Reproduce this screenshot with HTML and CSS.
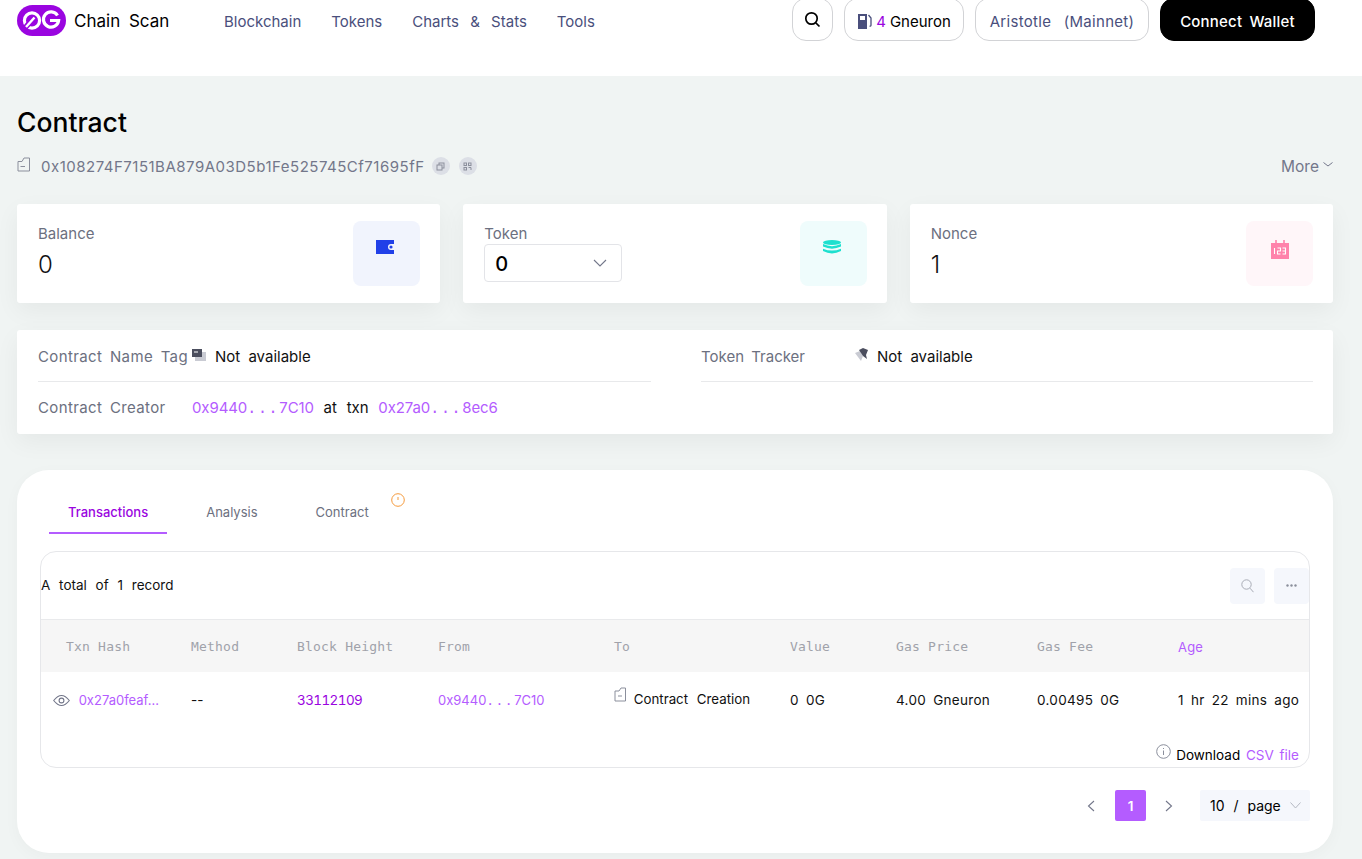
FILE: index.html
```html
<!DOCTYPE html>
<html lang="en">
<head>
  <meta charset="UTF-8" />
  <meta name="viewport" content="width=device-width, initial-scale=1.0"/>
  <title>0G Chain Scan</title>
  <link rel="stylesheet" href="styles.css">
</head>
<body>
  <header class="topbar">
    <div class="brand">
      <svg class="logo" width="49" height="31" viewBox="0 0 49 31">
        <rect x="0" y="0" width="49" height="31" rx="15.5" fill="#9a05e0"/>
        <circle cx="15" cy="15.5" r="7.6" fill="none" stroke="#fff" stroke-width="3.2"/>
        <path d="M7 24 L16 14" stroke="#9a05e0" stroke-width="5.5"/>
        <path d="M9 22 L17.5 12.5" stroke="#fff" stroke-width="2.4"/>
        <path d="M40.5 10.5 A7.6 7.6 0 1 0 41.6 15.5 H33" fill="none" stroke="#fff" stroke-width="3.2"/>
      </svg>
      <span class="brand-name">Chain Scan</span>
    </div>
    <nav class="nav">
      <a>Blockchain</a>
      <a>Tokens</a>
      <a>Charts &amp; Stats</a>
      <a>Tools</a>
    </nav>
    <div class="actions">
      <button class="pill search-btn">
        <svg width="17" height="17" viewBox="0 0 17 17" fill="none" stroke="#000" stroke-width="1.7"><circle cx="7.5" cy="7.5" r="5.7"/><path d="M11.8 11.8 L15.5 15.5"/></svg>
      </button>
      <button class="pill gas-btn">
        <svg width="15" height="17" viewBox="0 0 15 17"><path d="M1 1 H10 V16 H1 Z" fill="#4a4f7c"/><rect x="3" y="3" width="5" height="4" fill="#fff"/><path d="M11.5 2 L14 5 V12 Q14 13.5 12.5 13" fill="none" stroke="#4a4f7c" stroke-width="1.3"/></svg>
        <span class="gas-num">4</span> Gneuron
      </button>
      <button class="pill net-btn">Aristotle (Mainnet)</button>
      <button class="pill connect-btn">Connect Wallet</button>
    </div>
  </header>

  <main class="page">
    <h1 class="title">Contract</h1>
    <div class="address-row">
      <svg class="doc-icon" width="14" height="15" viewBox="0 0 14 15" fill="none" stroke="#8b8f9c" stroke-width="1"><path d="M1 4.5 H5 L7 1 H12.5 V14 H1 Z M3.5 9.5 H8"/></svg>
      <span class="address">0x108274F7151BA879A03D5b1Fe525745Cf71695fF</span>
      <span class="round-btn"><svg width="9" height="9" viewBox="0 0 9 9" fill="none" stroke="#8b8f9c"><rect x="3" y="1" width="5" height="5"/><rect x="1" y="3" width="5" height="5" fill="#dcdfe6"/></svg></span>
      <span class="round-btn"><svg width="9" height="9" viewBox="0 0 9 9" fill="none" stroke="#8b8f9c"><rect x="1" y="1" width="2.5" height="2.5"/><rect x="5.5" y="1" width="2.5" height="2.5"/><rect x="1" y="5.5" width="2.5" height="2.5"/><path d="M5.5 5.5 H8 V8"/></svg></span>
      <span class="more">More <svg width="10" height="5" viewBox="0 0 10 5" fill="none" stroke="#73778a"><path d="M0.5 0.5 L5 4 L9.5 0.5"/></svg></span>
    </div>

    <section class="cards">
      <div class="card">
        <div class="card-body">
          <div class="card-label">Balance</div>
          <div class="card-value">0</div>
        </div>
        <div class="card-icon icon-blue">
          <svg width="18" height="14" viewBox="0 0 18 14"><path d="M0 0 H18 V4 H15 A3 3 0 0 0 15 10 H18 V14 H0 Z" fill="#2140e8"/><circle cx="15" cy="7" r="1.6" fill="#2140e8"/></svg>
        </div>
      </div>
      <div class="card">
        <div class="card-body">
          <div class="card-label">Token</div>
          <div class="token-select">
            <span>0</span>
            <svg width="14" height="8" viewBox="0 0 14 8" fill="none" stroke="#73778a" stroke-width="1.1"><path d="M1 1 L7 7 L13 1"/></svg>
          </div>
        </div>
        <div class="card-icon icon-teal">
          <svg width="18" height="14" viewBox="0 0 18 17" preserveAspectRatio="none" fill="#1de0cf"><ellipse cx="9" cy="3" rx="9" ry="3"/><path d="M0 5 Q9 10 18 5 V8 Q9 13 0 8 Z"/><path d="M0 10.5 Q9 15 18 10.5 V13.5 Q9 19 0 13.5 Z"/></svg>
        </div>
      </div>
      <div class="card">
        <div class="card-body">
          <div class="card-label">Nonce</div>
          <div class="card-value">1</div>
        </div>
        <div class="card-icon icon-pink">
          <svg width="20" height="19" viewBox="0 0 20 19"><path d="M1 3 H19 V19 H1 Z" fill="#ff82ab"/><path d="M6 0 V5 M14 0 V5" stroke="#ff82ab" stroke-width="1.6"/><path d="M4.5 8 V14 M7.5 8 H10.5 V11 H7.5 V14 H10.5 M12.5 8 H15.5 V14 H12.5 M12.5 11 H15.5" stroke="#fff" stroke-width="1.1" fill="none"/></svg>
        </div>
      </div>
    </section>

    <section class="info">
      <div class="info-col">
        <div class="info-row with-line">
          <span class="info-label wide">Contract Name Tag</span>
          <svg class="tag-icon" width="14" height="12" viewBox="0 0 14 12"><rect x="3" y="3" width="11" height="9" fill="#c9cbd3"/><rect x="0" y="0" width="10" height="8" fill="#4b4e5e"/><path d="M2 3 H6" stroke="#fff"/></svg>
          <span class="info-value">Not available</span>
        </div>
        <div class="info-row second">
          <span class="info-label wide">Contract Creator</span>
          <span class="info-value creator"><a class="link">0x9440<span class="dots">...</span>7C10</a> at txn <a class="link">0x27a0<span class="dots">...</span>8ec6</a></span>
        </div>
      </div>
      <div class="info-col">
        <div class="info-row with-line">
          <span class="info-label">Token Tracker</span>
          <svg class="tag-icon" width="13" height="13" viewBox="0 0 13 13"><path d="M0 5 L5 3 L8 8 L6 13 Z" fill="#c9cbd3"/><path d="M4 2 L8 0 L13 2 L11 7 L12 11 L8 8 Z" fill="#4b4e5e"/></svg>
          <span class="info-value">Not available</span>
        </div>
      </div>
    </section>

    <section class="panel">
      <div class="tabs">
        <a class="tab active">Transactions</a>
        <a class="tab">Analysis</a>
        <a class="tab">Contract</a>
        <svg class="tab-alert" width="14" height="14" viewBox="0 0 14 14" fill="none" stroke="#f59a3c"><circle cx="7" cy="7" r="6.3"/><path d="M7 4 V7"/></svg>
      </div>

      <div class="table-box">
        <div class="toolbar">
          <span class="total">A total of 1 record</span>
          <div class="tools">
            <span class="tool-btn"><svg width="13" height="14" viewBox="0 0 13 14" fill="none" stroke="#a8abb5"><circle cx="5.5" cy="5.5" r="4.7"/><path d="M9 9.2 L12.5 13.2"/></svg></span>
            <span class="tool-btn"><svg width="11" height="3" viewBox="0 0 11 3" fill="#8b8f9c"><circle cx="1.5" cy="1.5" r="1.2"/><circle cx="5.5" cy="1.5" r="1.2"/><circle cx="9.5" cy="1.5" r="1.2"/></svg></span>
          </div>
        </div>
        <table class="tx-table">
          <colgroup>
            <col class="c-hash"><col class="c-method"><col class="c-block"><col class="c-addr"><col class="c-addr"><col class="c-method"><col class="c-block"><col class="c-block"><col>
          </colgroup>
          <thead>
            <tr>
              <th class="first">Txn Hash</th>
              <th>Method</th>
              <th>Block Height</th>
              <th>From</th>
              <th>To</th>
              <th>Value</th>
              <th>Gas Price</th>
              <th>Gas Fee</th>
              <th class="age">Age</th>
            </tr>
          </thead>
          <tbody>
            <tr>
              <td class="hash-cell">
                <svg width="17" height="13" viewBox="0 0 17 13" fill="none" stroke="#73778a" stroke-width="1.1"><path d="M0.7 6.5 Q8.5 -3.5 16.3 6.5 Q8.5 16.5 0.7 6.5 Z"/><circle cx="8.5" cy="6.5" r="2.4"/></svg>
                <a class="link">0x27a0feaf...</a>
              </td>
              <td>--</td>
              <td><a class="block-link">33112109</a></td>
              <td><a class="link addr">0x9440<span class="dots">...</span>7C10</a></td>
              <td class="to-cell">
                <svg width="13" height="15" viewBox="0 0 13 15" fill="none" stroke="#8b8f9c"><path d="M1 4 H5 L7 1 H11.5 V14 H1 Z M4 9 H8"/></svg>
                Contract Creation
              </td>
              <td class="mono">0 0G</td>
              <td class="mono">4.00 Gneuron</td>
              <td class="mono">0.00495 0G</td>
              <td class="mono">1 hr 22 mins ago</td>
            </tr>
          </tbody>
        </table>
        <div class="download">
          <svg width="15" height="15" viewBox="0 0 15 15" fill="none" stroke="#8b8f9c"><circle cx="7.5" cy="7.5" r="6.8"/><path d="M7.5 6.5 V11 M7.5 4 V5"/></svg>
          <span>Download <a class="link">CSV file</a></span>
        </div>
      </div>

      <div class="pager">
        <svg width="8" height="12" viewBox="0 0 8 12" fill="none" stroke="#73778a" stroke-width="1.1"><path d="M7 1 L1.5 6 L7 11"/></svg>
        <span class="page-num">1</span>
        <svg width="8" height="12" viewBox="0 0 8 12" fill="none" stroke="#73778a" stroke-width="1.1"><path d="M1 1 L6.5 6 L1 11"/></svg>
        <span class="page-size">10 / page
          <svg width="11" height="7" viewBox="0 0 11 7" fill="none" stroke="#b5b8c2"><path d="M0.5 0.5 L5.5 6 L10.5 0.5"/></svg>
        </span>
      </div>
    </section>
  </main>
</body>
</html>
```

FILE: styles.css
```css
html, body {
  margin: 0;
  padding: 0;
  height: 859px;
  overflow: hidden;
  font-family: 'Inter', 'Liberation Sans', sans-serif;
  background: #f0f4f3;
  color: #000;
  word-spacing: 3px;
}

a {
  text-decoration: none;
}

.topbar {
  display: flex;
  align-items: flex-start;
  height: 76px;
  padding-left: 17px;
  background: #fff;
  box-sizing: border-box;
}

.brand {
  display: flex;
  align-items: center;
  height: 41px;
  width: 207px;
  flex: none;
}

.logo {
  margin-right: 8px;
}

.brand-name {
  font-size: 17px;
  font-weight: 400;
  word-spacing: 4px;
}

.nav {
  display: flex;
  gap: 30px;
  height: 43px;
  align-items: center;
  font-size: 15px;
  color: #4a4f7c;
  word-spacing: 7px;
}

.actions {
  display: flex;
  gap: 11px;
  margin-left: auto;
  margin-right: 47px;
  margin-top: -2px;
}

.pill {
  display: flex;
  align-items: center;
  justify-content: center;
  height: 43px;
  padding: 3px 0 0;
  box-sizing: border-box;
  border: 1px solid #d2d3d6;
  border-radius: 14px;
  background: #fff;
  font-family: inherit;
  font-size: 15px;
  word-spacing: 3px;
}

.search-btn {
  width: 41px;
  padding-top: 0;
}

.gas-btn {
  width: 120px;
  gap: 4px;
  font-weight: 400;
  word-spacing: 0;
}

.gas-num { color: #9a05e0; }

.net-btn {
  width: 174px;
  color: #4a4f7c;
  letter-spacing: 0.3px;
  word-spacing: 8px;
}

.connect-btn {
  width: 155px;
  background: #000;
  border-color: #000;
  color: #fff;
  font-weight: 500;
  letter-spacing: 0.2px;
}

.page {
  padding: 0 29px 0 17px;
}

.title {
  margin: 30px 0 0;
  font-size: 26.5px;
  line-height: 32px;
  font-weight: 500;
}

.address-row {
  display: flex;
  align-items: center;
  height: 20px;
  margin-top: 18px;
  font-size: 15px;
  color: #73778a;
}

.doc-icon {
  margin-right: 10px;
  margin-top: -3px;
}

.address {
  margin-right: 7px;
  letter-spacing: 0.5px;
  word-spacing: 0;
}

.round-btn {
  display: flex;
  align-items: center;
  justify-content: center;
  width: 18px;
  height: 18px;
  margin-right: 9px;
  border-radius: 50%;
  background: #dcdfe6;
}

.more {
  margin-left: auto;
  display: flex;
  align-items: center;
  gap: 4px;
  font-size: 15.5px;
}

.more svg {
  margin-top: -4px;
}

.cards {
  display: grid;
  grid-template-columns: repeat(3, 1fr);
  gap: 23px;
  margin-top: 28px;
}

.card {
  display: flex;
  justify-content: space-between;
  height: 99px;
  padding: 17px 20px 0 21px;
  box-sizing: border-box;
  background: #fff;
  border-radius: 3px;
  box-shadow: 0 8px 24px rgba(0, 0, 0, 0.05);
}

.card-label {
  margin-top: 4px;
  font-size: 15px;
  line-height: 18px;
  color: #6c7080;
}

.card-value {
  margin-top: 8px;
  font-size: 24px;
  line-height: 28px;
  font-weight: 300;
  color: #111;
}

.card-icon {
  display: flex;
  justify-content: center;
  align-items: flex-start;
  width: 67px;
  height: 65px;
  padding-top: 19px;
  box-sizing: border-box;
  border-radius: 8px;
}

.icon-blue { background: #f1f4fd; }
.icon-teal { background: #effcfc; }
.icon-pink { background: #fff6f9; }

.icon-blue svg { margin-left: -3px; }
.icon-teal svg { margin-left: -2px; }

.token-select {
  display: flex;
  align-items: center;
  justify-content: space-between;
  width: 138px;
  height: 38px;
  margin-top: 1px;
  padding: 0 14px 0 10px;
  box-sizing: border-box;
  border: 1px solid #e3e4e8;
  border-radius: 4px;
  font-size: 20px;
  font-weight: 500;
}

.token-select span {
  padding-top: 2px;
}

.info {
  display: grid;
  grid-template-columns: 613px 612px;
  justify-content: space-between;
  height: 104px;
  margin-top: 27px;
  padding: 0 20px 0 21px;
  box-sizing: border-box;
  background: #fff;
  border-radius: 3px;
  box-shadow: 0 8px 24px rgba(0, 0, 0, 0.05);
}

.info-row {
  display: flex;
  align-items: center;
  height: 52px;
  box-sizing: border-box;
  font-size: 15px;
}

.with-line {
  padding-top: 2px;
  border-bottom: 1px solid #e8e9eb;
}

.second {
  padding-bottom: 2px;
}

.info-label {
  width: 154px;
  flex: none;
  color: #6c7080;
}

.info-label.wide {
  letter-spacing: 0.38px;
  white-space: nowrap;
}

.tag-icon {
  margin-right: 9px;
  margin-top: -4px;
}

.info-value {
  color: #111;
  word-spacing: 4px;
}

.info-value.creator {
  word-spacing: 5.5px;
}

.link {
  color: #b45cff;
}

.dots {
  font-family: 'DejaVu Sans Mono', monospace;
  letter-spacing: 0.11em;
}

.creator .link {
  letter-spacing: -0.1px;
}

.panel {
  height: 383px;
  margin-top: 36px;
  padding: 0 23px;
  box-sizing: border-box;
  background: #fff;
  border-radius: 32px;
  box-shadow: 0 4px 16px rgba(0, 0, 0, 0.03);
}

.tabs {
  position: relative;
  display: flex;
  height: 64px;
  padding-left: 9px;
  font-size: 13px;
  word-spacing: 2px;
}

.tab {
  display: flex;
  align-items: flex-end;
  padding: 0 19px 12px;
  margin-right: 20px;
  height: 64px;
  box-sizing: border-box;
  color: #6c7080;
  border-bottom: 2px solid transparent;
}

.tab.active {
  color: #9a05e0;
  font-weight: 500;
  border-bottom-color: #b45cff;
}

.tab-alert {
  position: absolute;
  left: 351px;
  top: 23px;
}

.table-box {
  height: 217px;
  margin-top: 17px;
  box-sizing: border-box;
  border: 1px solid #e6e7ea;
  border-radius: 16px;
  overflow: hidden;
}

.toolbar {
  display: flex;
  align-items: center;
  justify-content: space-between;
  height: 67px;
  font-size: 13.5px;
  color: #111;
  word-spacing: 5px;
}

.total {
  margin-top: -2px;
}

.tools {
  display: flex;
  gap: 9px;
}

.tool-btn {
  display: flex;
  align-items: center;
  justify-content: center;
  width: 35px;
  height: 36px;
  border-radius: 4px;
  background: #f5f7fc;
}

.tx-table {
  width: 100%;
  border-collapse: collapse;
  table-layout: fixed;
}

.c-hash { width: 150px; }
.c-method { width: 106px; }
.c-block { width: 141px; }
.c-addr { width: 176px; }

.tx-table th {
  height: 52px;
  padding: 2px 0 0;
  background: #f6f6f6;
  border-top: 1px solid #e9eaec;
  box-sizing: border-box;
  font-family: 'DejaVu Sans Mono', 'Liberation Mono', monospace;
  font-size: 13px;
  font-weight: 400;
  text-align: left;
  color: #a0a2aa;
  letter-spacing: 0.2px;
  word-spacing: 0;
}

.tx-table th.first {
  padding-left: 25px;
}

.tx-table th.age {
  font-family: inherit;
  color: #b45cff;
}

.tx-table td {
  height: 56px;
  padding: 0;
  font-size: 13.5px;
  color: #111;
  white-space: nowrap;
  overflow: hidden;
}

.tx-table td.mono {
  word-spacing: 3px;
  letter-spacing: 0.3px;
}

.tx-table .hash-cell {
  padding-left: 12px;
  font-size: 13px;
}

.hash-cell svg {
  vertical-align: -2px;
  margin-right: 2px;
}

.block-link {
  color: #9a05e0;
  font-variant-numeric: tabular-nums;
  letter-spacing: -0.6px;
}

.link.addr {
  font-size: 13px;
}

.tx-table .to-cell {
  height: 50px;
  padding-bottom: 6px;
  font-size: 13.3px;
  word-spacing: 5px;
}

.to-cell svg {
  vertical-align: 2px;
  margin-right: -2px;
}

.download {
  display: flex;
  justify-content: flex-end;
  align-items: center;
  gap: 6px;
  margin-top: 19px;
  padding-right: 10px;
  font-size: 13.5px;
}

.download svg {
  margin-top: -6px;
  margin-right: -1px;
}

.download span {
  word-spacing: 2px;
}

.pager {
  display: flex;
  align-items: center;
  justify-content: flex-end;
  margin-top: 22px;
  font-size: 14px;
}

.page-num {
  display: flex;
  align-items: center;
  justify-content: center;
  width: 31px;
  height: 31px;
  margin: 0 19px 0 20px;
  background: #b45cff;
  color: #fff;
  font-size: 13.5px;
  font-weight: 600;
  border-radius: 2px;
}

.page-size {
  display: flex;
  align-items: center;
  justify-content: space-between;
  width: 110px;
  height: 31px;
  margin-left: 27px;
  padding: 0 9px 0 10px;
  box-sizing: border-box;
  background: #f5f7fc;
  border-radius: 2px;
  word-spacing: 5px;
}
```
